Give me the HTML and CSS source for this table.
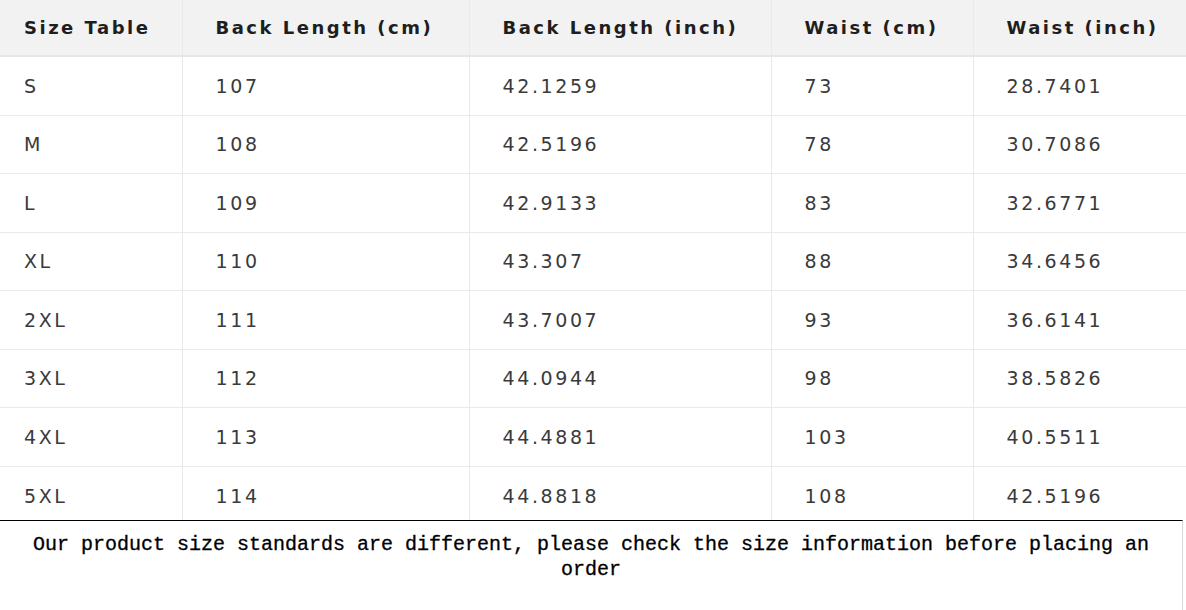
FILE: index.html
```html
<!DOCTYPE html>
<html>
<head>
<meta charset="utf-8">
<link rel="stylesheet" href="styles.css">
</head>
<body>
<div class="page">
  <table class="size-table">
    <colgroup>
      <col class="c1"><col class="c2"><col class="c3"><col class="c4"><col class="c5">
    </colgroup>
    <thead>
      <tr><th>Size Table</th><th>Back Length (cm)</th><th>Back Length (inch)</th><th>Waist (cm)</th><th>Waist (inch)</th></tr>
    </thead>
    <tbody>
      <tr><td>S</td><td>107</td><td>42.1259</td><td>73</td><td>28.7401</td></tr>
      <tr><td>M</td><td>108</td><td>42.5196</td><td>78</td><td>30.7086</td></tr>
      <tr><td>L</td><td>109</td><td>42.9133</td><td>83</td><td>32.6771</td></tr>
      <tr><td>XL</td><td>110</td><td>43.307</td><td>88</td><td>34.6456</td></tr>
      <tr><td>2XL</td><td>111</td><td>43.7007</td><td>93</td><td>36.6141</td></tr>
      <tr><td>3XL</td><td>112</td><td>44.0944</td><td>98</td><td>38.5826</td></tr>
      <tr><td>4XL</td><td>113</td><td>44.4881</td><td>103</td><td>40.5511</td></tr>
      <tr class="last"><td>5XL</td><td>114</td><td>44.8818</td><td>108</td><td>42.5196</td></tr>
    </tbody>
  </table>
  <div class="note">
    <p>Our product size standards are different, please check the size information before placing an order</p>
  </div>
</div>
</body>
</html>
```
FILE: styles.css
```css
html, body { margin: 0; padding: 0; background: #fff; }
.page { width: 1186px; height: 610px; overflow: hidden; }
.size-table {
  border-collapse: collapse;
  table-layout: fixed;
  width: 1186px;
  font-family: "DejaVu Sans", sans-serif;
  font-size: 19px;
  letter-spacing: 2.6px;
  color: #3a3a3a;
}
.c1 { width: 182px; } .c2 { width: 287px; } .c3 { width: 302px; } .c4 { width: 202px; } .c5 { width: 213px; }
.size-table th, .size-table td {
  text-align: left;
  padding: 0 0 0 33px;
  border: 1px solid #e9e9e9;
  border-top: none;
  white-space: nowrap;
}
.size-table th:first-child, .size-table td:first-child { padding-left: 24px; border-left: none; }
.size-table th:last-child, .size-table td:last-child { border-right: none; }
.size-table th {
  height: 55px;
  background: #f2f2f2;
  color: #1e1e1e;
  font-size: 18px;
  font-weight: bold;
  letter-spacing: 2.5px;
  border-bottom: 2px solid #e6e6e6;
}
.size-table td { height: 57.5px; }
.size-table tr.last td { height: 54px; padding-top: 5px; box-sizing: border-box; border-bottom: none; }
.note {
  width: 1183px;
  height: 90px;
  border-top: 1px solid #000;
  border-right: 1px solid #d8d8d8;
  box-sizing: border-box;
}
.note p {
  margin: 0;
  padding: 11px 30px 0;
  text-align: center;
  font-family: "Liberation Mono", monospace;
  font-size: 20px;
  letter-spacing: 0;
  line-height: 25px;
  color: #000;
  -webkit-text-stroke: 0.3px #000;
}
```
